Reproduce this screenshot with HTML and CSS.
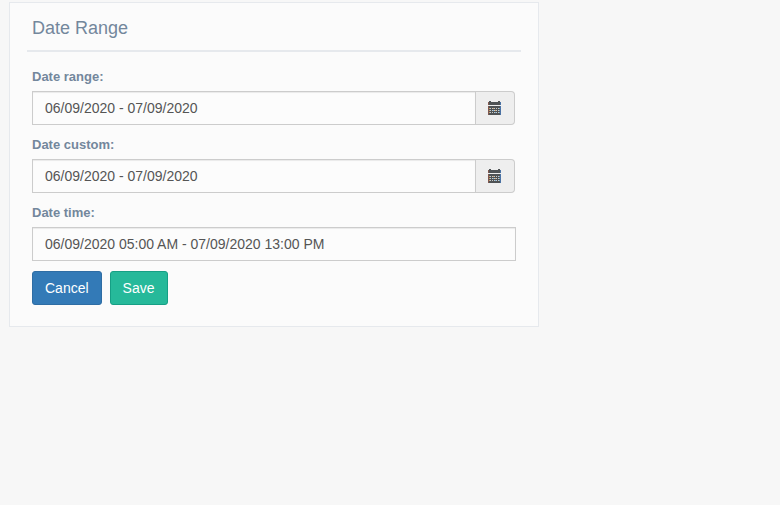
FILE: index.html
```html
<!DOCTYPE html>
<html lang="en">
<head>
    <meta charset="UTF-8">
    <meta name="viewport" content="width=device-width, initial-scale=1.0">
    <title>Date Range</title>
    <link rel="stylesheet" href="styles.css">
</head>
<body>
    <svg class="sprite" aria-hidden="true">
        <symbol id="calendar" viewBox="0 0 13 14" shape-rendering="crispEdges">
            <path fill="#4f5355" d="M1 0h2v1h7V0h2v1h1v3H0V1h1zM0 5h13v9H0z"/>
            <path fill="#c9cbc8" d="M2 7h1v1H2zM4 7h1v1H4zM6 7h1v1H6zM8 7h1v1H8zM10 7h1v1h-1zM2 9h1v1H2zM4 9h1v1H4zM6 9h1v1H6zM8 9h1v1H8zM10 9h1v1h-1zM2 11h1v1H2zM4 11h1v1H4zM6 11h1v1H6zM8 11h1v1H8zM10 11h1v1h-1z"/>
            <path fill="#80584f" d="M0 1h1v3H0zM0 5h1v9H0z"/>
            <path fill="#4b72a3" d="M12 1h1v3h-1zM12 5h1v9h-1z"/>
            <path fill="#c79a68" d="M1 7h1v1H1zM1 9h1v1H1zM1 11h1v1H1zM5 7h1v1H5zM7 9h1v1H7z"/>
            <path fill="#6b9dc6" d="M11 7h1v1h-1zM11 9h1v1h-1zM11 11h1v1h-1zM5 9h1v1H5zM7 11h1v1H7z"/>
        </symbol>
    </svg>

    <div class="panel">
        <div class="panel-title">
            <h2>Date Range</h2>
        </div>
        <form class="panel-content">
            <div class="form-group">
                <label for="date-range">Date range:</label>
                <div class="input-group">
                    <input class="form-control" id="date-range" name="date_range" type="text" value="06/09/2020 - 07/09/2020">
                    <span class="input-addon"><svg class="icon" aria-hidden="true"><use href="#calendar"/></svg></span>
                </div>
            </div>
            <div class="form-group">
                <label for="date-custom">Date custom:</label>
                <div class="input-group">
                    <input class="form-control" id="date-custom" name="date_custom" type="text" value="06/09/2020 - 07/09/2020">
                    <span class="input-addon"><svg class="icon" aria-hidden="true"><use href="#calendar"/></svg></span>
                </div>
            </div>
            <div class="form-group">
                <label for="date-time">Date time:</label>
                <input class="form-control" id="date-time" name="date_time" type="text" value="06/09/2020 05:00 AM - 07/09/2020 13:00 PM">
            </div>
            <div class="buttons">
                <button class="btn btn-primary" type="button">Cancel</button>
                <button class="btn btn-success" type="submit">Save</button>
            </div>
        </form>
    </div>
</body>
</html>
```
FILE: styles.css
```css
* {
    box-sizing: border-box;
}

body {
    margin: 0;
    padding: 2px 9px;
    background-color: #f7f7f7;
    color: #73879c;
    font-family: "Liberation Sans", Arial, sans-serif;
    font-size: 13px;
}

.sprite {
    display: none;
}

.panel {
    max-width: 530px;
    padding: 10px 17px;
    background-color: #fbfbfb;
    border: 1px solid #e6e9ed;
}

.panel-title {
    padding: 5px 5px 12px;
    border-bottom: 2px solid #e6e9ed;
}

.panel-title h2 {
    margin: 0;
    font-size: 18px;
    font-weight: 400;
    line-height: 20px;
}

.panel-content {
    display: flex;
    flex-direction: column;
    gap: 10px;
    padding: 15px 5px 11px;
}

.form-group label {
    display: block;
    margin-bottom: 5px;
    font-weight: 700;
    line-height: 19px;
}

.input-group {
    display: flex;
    margin-right: 1px;
}

.form-control {
    display: block;
    width: 100%;
    height: 34px;
    padding: 6px 12px;
    background-color: #fcfcfc;
    border: 1px solid #ccc;
    border-radius: 0;
    box-shadow: inset 0 1px 1px rgba(0, 0, 0, 0.075);
    color: #555;
    font-family: inherit;
    font-size: 14px;
    line-height: 20px;
}

.input-group .form-control {
    flex: 1;
    min-width: 0;
}

.input-addon {
    display: flex;
    align-items: center;
    width: 39px;
    padding: 0 12px;
    background-color: #eee;
    border: 1px solid #ccc;
    border-left: 0;
    border-radius: 0 4px 4px 0;
}

.icon {
    width: 13px;
    height: 14px;
}

.buttons {
    display: flex;
    gap: 8px;
}

.btn {
    height: 34px;
    padding: 6px 12px;
    border: 1px solid;
    border-radius: 3px;
    color: #fff;
    font-family: inherit;
    font-size: 14px;
    line-height: 20px;
    cursor: pointer;
}

.btn-primary {
    background-color: #337ab7;
    border-color: #2e6da4;
}

.btn-success {
    background-color: #26b99a;
    border-color: #169f85;
}
```
